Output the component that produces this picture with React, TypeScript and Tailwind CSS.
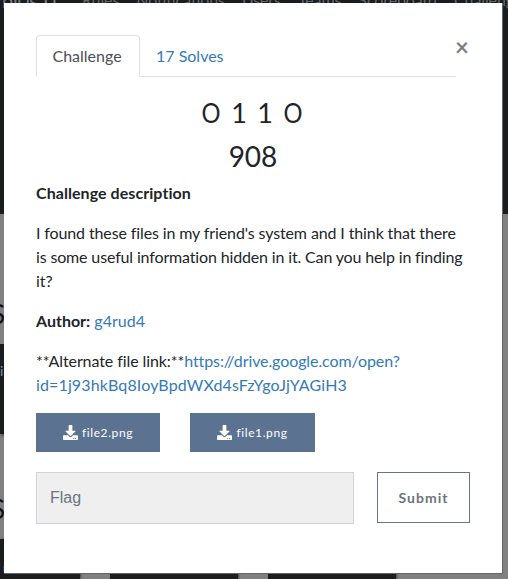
import React from "react";

const navLinks = ["Rules", "Notifications", "Users", "Teams", "Scoreboard", "Challenges"];

function Backdrop() {
  return (
    <div className="absolute inset-0 flex flex-col overflow-hidden bg-[#808080]">
      <div className="h-[214px] shrink-0 bg-[#1a1d20]">
        <nav className="-mt-2 flex gap-[17px] whitespace-nowrap pl-0.5 text-base leading-4 tracking-[-0.1px] text-[#64686b]">
          <span className="mr-[9px] w-[54px] text-xl leading-4 text-[#747a7e]">bi0s IT</span>
          {navLinks.map((link) => <span key={link}>{link}</span>)}
        </nav>
      </div>
      <div className="-ml-[9px] mt-[86px] h-[44px] shrink-0 text-[26px] leading-7 text-[#111]">S</div>
      <div className="h-[90px] w-20 shrink-0 bg-[#1a1d20] pt-[17px] text-sm text-[#7197a2] shadow-[1px_2px_2px_#555]">i</div>
      <div className="-ml-[9px] mt-[61px] h-[44px] shrink-0 text-[26px] leading-7 text-[#111]">S</div>
      <div className="flex gap-[30px] text-xs leading-4 text-[#747a7e]">
        <div className="h-10 w-20 bg-[#1a1d20] pl-[3px] pt-[21px] text-[#7197a2] shadow-[1px_0_2px_#444]">ng</div>
        <div className="h-10 w-[128px] bg-[#1a1d20] pl-[62px] pt-[21px] shadow-[1px_0_2px_#444]">ypp</div>
        <div className="h-10 w-[128px] bg-[#1a1d20] shadow-[1px_0_2px_#444]" />
      </div>
    </div>
  );
}

function DownloadIcon() {
  return (
    <svg viewBox="0 0 512 512" className="size-[15px] shrink-0 fill-white">
      <path d="M216 0h80c13.300 0 24 10.700 24 24v168h87.700c17.800 0 26.700 21.500 14.100 34.100L269.700 378.300c-7.500 7.500-19.800 7.500-27.300 0L90.100 226.100c-12.600-12.600-3.700-34.100 14.100-34.100H192V24c0-13.300 10.700-24 24-24zm296 376v112c0 13.300-10.700 24-24 24H24c-13.300 0-24-10.700-24-24V376c0-13.300 10.700-24 24-24h146.700l49 49c20.100 20.100 52.500 20.100 72.600 0l49-49H488c13.300 0 24 10.700 24 24zm-124 88c0-11-9-20-20-20s-20 9-20 20 9 20 20 20 20-9 20-20zm64 0c0-11-9-20-20-20s-20 9-20 20 9 20 20 20 20-9 20-20z" />
    </svg>
  );
}

function FileButton({ name, className }: { name: string; className: string }) {
  return (
    <button className={"flex h-[39px] items-center justify-center gap-1 bg-[#5b7290] text-xs tracking-[0.6px] text-white " + className}>
      <DownloadIcon />
      <span>{name}</span>
    </button>
  );
}

export default function App() {
  return (
    <div className="relative h-[579px] w-[508px] overflow-hidden pl-1 pt-[3px] font-['Lato',sans-serif] text-base leading-6 text-[#212529]">
      <Backdrop />
      <main className="relative h-[571px] w-[499px] border-r border-b border-[#666] bg-white px-8 pt-8">
        <header className="flex">
          <nav className="flex h-[42px] w-[420px] border-b border-[#dee2e6]">
            <a className="h-[42px] w-[104px] rounded-t border border-b-white border-[#dee2e6] bg-white px-[15.5px] pt-2 text-[#495057]">Challenge</a>
            <a className="px-4 pt-[9px] text-[#337ab7]">17 Solves</a>
          </nav>
          <button className="-ml-px h-6 w-3 text-2xl leading-6 font-bold text-[#7f7f7f]">×</button>
        </header>
        <h3 className="mt-[18px] flex justify-center pr-0.5 text-[27px] leading-9">
          <span className="w-[30px] origin-center scale-x-[0.88] text-center">O</span>
          <span className="w-[26px] text-center">1</span>
          <span className="w-[26px] text-center">1</span>
          <span className="w-[30px] origin-center scale-x-[0.88] text-center">O</span>
        </h3>
        <h4 className="mt-2 text-center text-[28px] leading-[34px]">908</h4>
        <p className="mt-2 font-bold tracking-[0.06px]">Challenge description</p>
        <div className="mt-4 whitespace-nowrap">
          <p className="tracking-[-0.12px]">I found these files in my friend's system and I think that there</p>
          <p className="tracking-[-0.15px]">is some useful information hidden in it. Can you help in finding</p>
          <p>it?</p>
        </div>
        <p className="mt-4"><strong>Author:</strong> <a className="text-[#337ab7]">g4rud4</a></p>
        <div className="mt-4 whitespace-nowrap">
          <p className="tracking-[-0.09px]">**Alternate file link:**<a className="text-[#337ab7]">https://drive.google.com/open?</a></p>
          <p className="tracking-[0.13px] text-[#337ab7]">id=1j93hkBq8IoyBpdWXd4sFzYgoJjYAGiH3</p>
        </div>
        <div className="mt-4 flex gap-[30px]">
          <FileButton name="file2.png" className="w-[124px]" />
          <FileButton name="file1.png" className="w-[125px]" />
        </div>
        <div className="mt-5 flex gap-[23px]">
          <input placeholder="Flag" className="h-[52px] w-[318px] border border-[#ced4da] bg-[#efefef] px-[13px] font-['Liberation_Sans',sans-serif] text-base placeholder:text-[#6c757d]" />
          <button className="h-[51px] w-[93px] border border-[#6c757d] text-sm font-bold tracking-[1px] text-[#6c757d]">Submit</button>
        </div>
      </main>
    </div>
  );
}
